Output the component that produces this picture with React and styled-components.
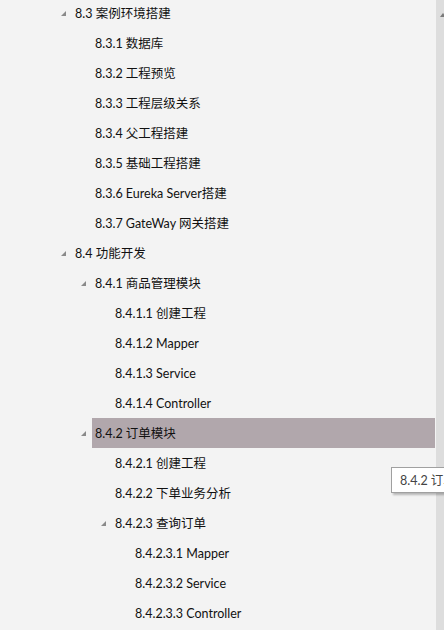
import React from "react"
import styled, { createGlobalStyle } from "styled-components"

const GlobalStyle = createGlobalStyle`
  html, body {
    margin: 0;
    padding: 0;
    background: #f3f3f3;
    overflow: hidden;
  }
`

const Wrap = styled.div`
  position: relative;
  display: flex;
  width: 444px;
  height: 630px;
  overflow: hidden;
  background: #f3f3f3;
  font-family: "Segoe UI", Lato, "Noto Sans CJK SC", sans-serif;
  font-size: 12.5px;
  color: #111;
`

const Tree = styled.div`
  flex: 1;
  margin-top: -2px;
`

const Row = styled.div`
  display: flex;
  align-items: center;
  height: 30px;
  padding-left: ${(p) => 58 + (p.level - 1) * 20}px;
`

const Toggle = styled.div`
  width: 14px;
  flex: none;
  display: flex;
  align-items: center;
  padding-left: 3px;
  box-sizing: border-box;
`

const Label = styled.div`
  flex: 1;
  height: 30px;
  line-height: 31px;
  padding-left: 3px;
  margin-right: 1px;
  white-space: nowrap;
  background: ${(p) => (p.selected ? "#b1a7ac" : "transparent")};
`

const Scrollbar = styled.div`
  width: 8px;
  flex: none;
  background: #dddddd;
  position: relative;
`

const ScrollArrow = styled.div`
  position: absolute;
  top: 5px;
  left: 4px;
`

const Tooltip = styled.div`
  position: absolute;
  left: 391px;
  top: 467px;
  height: 26px;
  line-height: 26px;
  padding: 0 8px;
  background: #ffffff;
  border: 1px solid #a0a0a0;
  box-sizing: border-box;
  box-shadow: 2px 2px 2px rgba(0, 0, 0, 0.25);
  color: #444;
  white-space: nowrap;
`

const Caret = () => (
  <svg width="5" height="5" viewBox="0 0 5 5">
    <polygon points="5,0 5,5 0,5" fill="#8a8a8a" />
  </svg>
)

const items = [
  { level: 1, text: "8.3 案例环境搭建", open: true },
  { level: 2, text: "8.3.1 数据库" },
  { level: 2, text: "8.3.2 工程预览" },
  { level: 2, text: "8.3.3 工程层级关系" },
  { level: 2, text: "8.3.4 父工程搭建" },
  { level: 2, text: "8.3.5 基础工程搭建" },
  { level: 2, text: "8.3.6 Eureka Server搭建" },
  { level: 2, text: "8.3.7 GateWay 网关搭建" },
  { level: 1, text: "8.4 功能开发", open: true },
  { level: 2, text: "8.4.1 商品管理模块", open: true },
  { level: 3, text: "8.4.1.1 创建工程" },
  { level: 3, text: "8.4.1.2 Mapper" },
  { level: 3, text: "8.4.1.3 Service" },
  { level: 3, text: "8.4.1.4 Controller" },
  { level: 2, text: "8.4.2 订单模块", open: true, selected: true },
  { level: 3, text: "8.4.2.1 创建工程" },
  { level: 3, text: "8.4.2.2 下单业务分析" },
  { level: 3, text: "8.4.2.3 查询订单", open: true },
  { level: 4, text: "8.4.2.3.1 Mapper" },
  { level: 4, text: "8.4.2.3.2 Service" },
  { level: 4, text: "8.4.2.3.3 Controller" },
]

const App = () => (
  <Wrap>
    <GlobalStyle />
    <Tree>
      {items.map((item) => (
        <Row key={item.text} level={item.level}>
          <Toggle>{item.open && <Caret />}</Toggle>
          <Label selected={item.selected}>{item.text}</Label>
        </Row>
      ))}
    </Tree>
    <Scrollbar>
      <ScrollArrow>
        <svg width="6" height="4" viewBox="0 0 6 4">
          <polygon points="3,0 6,4 0,4" fill="#7a7a7a" />
        </svg>
      </ScrollArrow>
    </Scrollbar>
    <Tooltip>8.4.2 订单模块</Tooltip>
  </Wrap>
)

export default App
